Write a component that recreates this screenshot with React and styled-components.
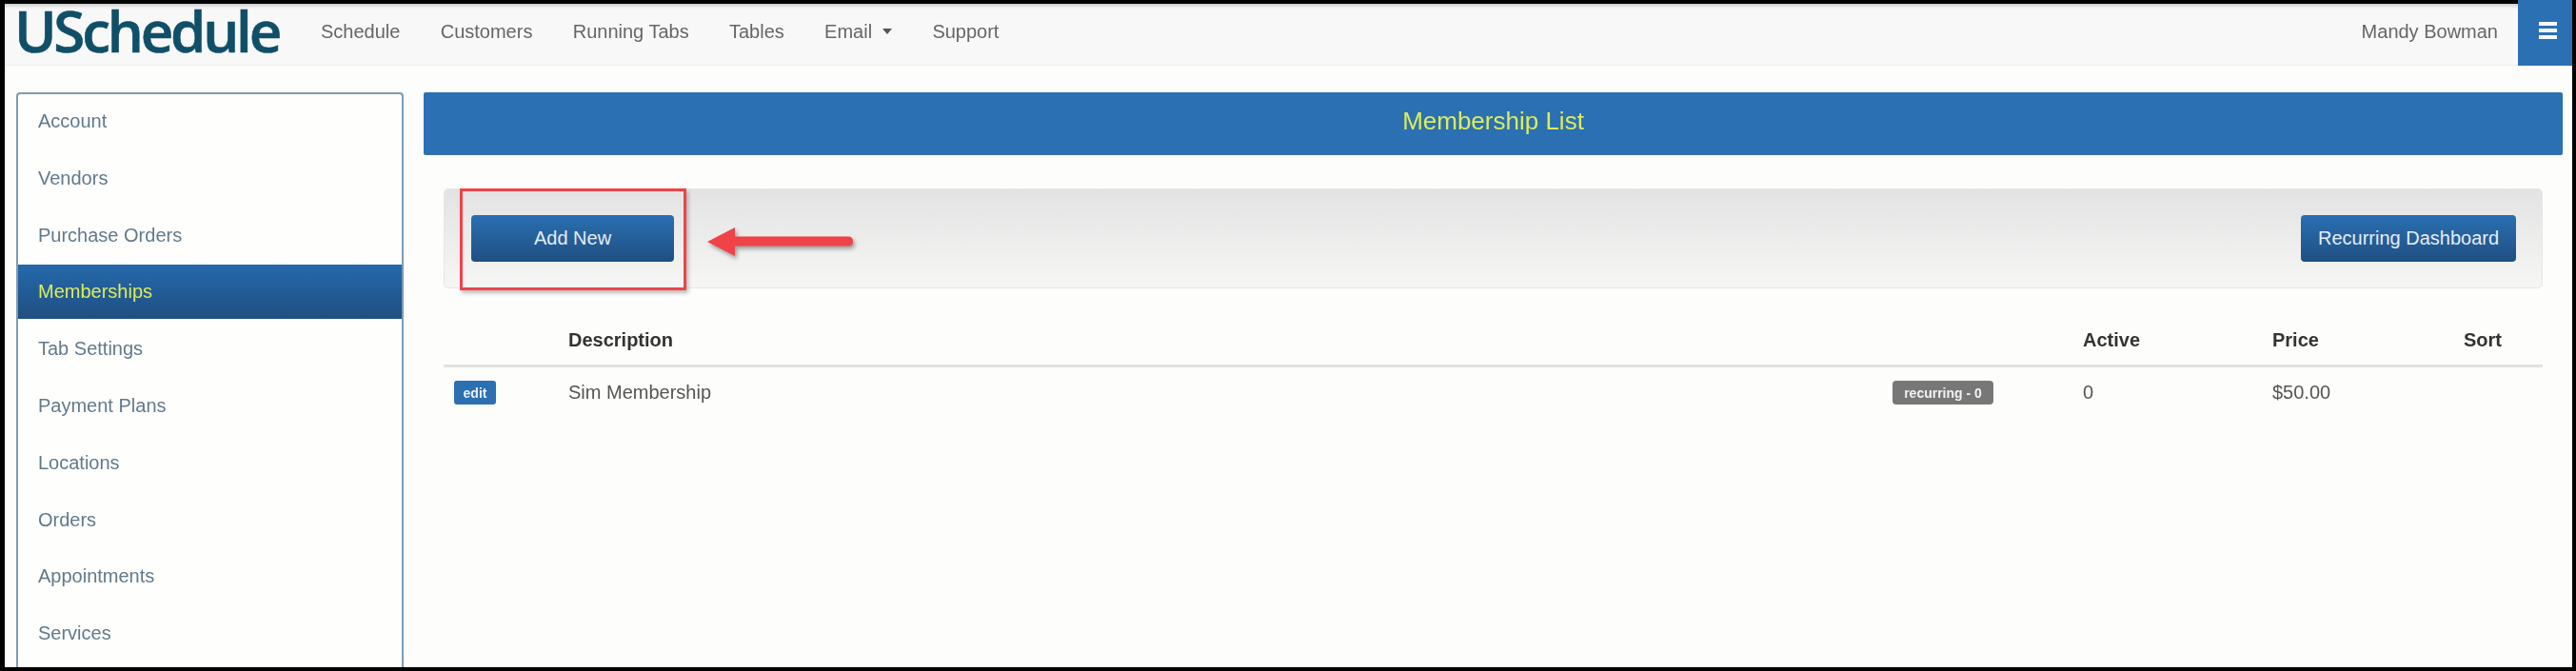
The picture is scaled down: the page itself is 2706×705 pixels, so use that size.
import React from "react";
import styled, { createGlobalStyle } from "styled-components";

const Global = createGlobalStyle`
  html, body { margin: 0; padding: 0; background: #000; }
  * { box-sizing: border-box; }
  body { font-family: "Liberation Sans", Arial, sans-serif; }
`;

const Frame = styled.div`
  width: 2706px;
  height: 705px;
  border-style: solid;
  border-color: #000;
  border-width: 4px 4px 4px 5px;
  background: #fdfdfb;
  display: flex;
  flex-direction: column;
  filter: blur(0.45px);
`;

const Navbar = styled.header`
  height: 65px;
  flex: none;
  display: flex;
  align-items: stretch;
  background: #f8f8f8;
  border-bottom: 1px solid #efefef;
  box-shadow: inset 0 5px 4px -3px #c4c4c4;
`;

const Logo = styled.div`
  width: 332px;
  padding-left: 10px;
  font-family: "Open Sans", sans-serif;
  font-weight: 600;
  font-size: 60px;
  line-height: 56px;
  letter-spacing: -3.2px;
  -webkit-text-stroke: 0.6px #0f4f68;
  color: #0f4f68;
`;

const NavLinks = styled.nav`
  display: flex;
  align-items: center;
  gap: 42.3px;
  flex: 1;
  padding-bottom: 6px;
`;

const NavLink = styled.a`
  font-size: 20px;
  color: #666;
  display: inline-flex;
  align-items: center;
`;

const Caret = styled.span`
  width: 0;
  height: 0;
  margin-left: 11px;
  border-top: 6px solid #555;
  border-left: 5px solid transparent;
  border-right: 5px solid transparent;
`;

const UserName = styled.div`
  display: flex;
  align-items: center;
  padding: 0 21px 6px 0;
  font-size: 20px;
  color: #666;
`;

const MenuBlock = styled.div`
  width: 57px;
  margin-top: -4px;
  margin-bottom: -1px;
  background: #2a70b3;
  display: flex;
  flex-direction: column;
  align-items: center;
  justify-content: flex-start;
  gap: 3px;
  padding: 23px 0 0 6px;
`;

const MenuBar = styled.span`
  width: 19px;
  height: 4px;
  background: #f4f8fb;
`;

const Body = styled.div`
  flex: 1;
  min-height: 0;
  display: flex;
  align-items: stretch;
  padding-top: 28px;
  overflow: hidden;
`;

const Sidebar = styled.aside`
  width: 407px;
  margin-left: 12px;
  flex: none;
  border: 2px solid #7d9bb3;
  border-bottom: 0;
  border-radius: 4px 4px 0 0;
  background: #fefefc;
  overflow: hidden;
`;

const SideList = styled.div`
  margin-top: -1px;
`;

const SideItem = styled.div`
  height: 59.75px;
  padding-left: 21px;
  display: flex;
  align-items: center;
  font-size: 20px;
  color: ${(p) => (p.$active ? "#dcec5a" : "#62798c")};
  background: ${(p) =>
    p.$active ? "linear-gradient(#2569ac, #1f4f80)" : "transparent"};
  ${(p) => p.$active && "height: 57px; margin: 0.5px 0 2.25px;"}
`;

const Main = styled.main`
  flex: 1;
  padding: 0 10px 0 21px;
  display: flex;
  flex-direction: column;
`;

const TitleBar = styled.div`
  height: 66px;
  background: #2a70b3;
  border-radius: 2px;
  border-bottom: 2px solid #3c6f9f;
  display: flex;
  align-items: center;
  justify-content: center;
  font-size: 26px;
  color: #dcec5a;
  padding-bottom: 4px;
`;

const Content = styled.div`
  padding: 35px 21px 0;
`;

const Well = styled.div`
  position: relative;
  height: 105px;
  display: flex;
  align-items: center;
  justify-content: space-between;
  padding: 0 27px 0 28px;
  background: linear-gradient(#e3e3e3, #f6f6f5);
  border: 1px solid #e6e6e6;
  border-radius: 5px;
`;

const Button = styled.button`
  height: 49px;
  width: ${(p) => p.$width}px;
  border: 0;
  border-radius: 4px;
  background: linear-gradient(#2a6fb1, #1f4f82);
  color: #e4edf5;
  font-family: inherit;
  font-size: 20px;
  padding: 0;
`;

const Highlight = styled.div`
  position: absolute;
  left: 16px;
  top: -1px;
  width: 238px;
  height: 107px;
  border: 3px solid #f04347;
  box-shadow: 2px 3px 4px rgba(0, 0, 0, 0.25);
  pointer-events: none;
`;

const Arrow = styled.svg`
  position: absolute;
  left: 276px;
  top: 40px;
  overflow: visible;
  filter: drop-shadow(2px 3px 2px rgba(0, 0, 0, 0.35));
`;

const TableRow = styled.div`
  display: grid;
  grid-template-columns: 131px 1591px 199px 201px 1fr;
  align-items: center;
  font-size: 20px;
  color: ${(p) => (p.$head ? "#333" : "#555")};
  font-weight: ${(p) => (p.$head ? 700 : 400)};
  height: ${(p) => (p.$head ? 54 : 53)}px;
  ${(p) => p.$head && "margin-top: 29px; border-bottom: 3px solid #e2e2e2;"}
`;

const CellWithBadge = styled.div`
  display: flex;
  justify-content: space-between;
  align-items: center;
  padding-right: 94px;
`;

const EditBadge = styled.span`
  justify-self: start;
  margin-left: 11px;
  width: 44px;
  height: 25px;
  border-radius: 3px;
  background: #2a70b3;
  color: #eef3f8;
  font-size: 14px;
  font-weight: 700;
  display: flex;
  align-items: center;
  justify-content: center;
`;

const GreyBadge = styled.span`
  width: 106px;
  height: 25px;
  border-radius: 4px;
  background: #777;
  color: #f2f2f2;
  font-size: 14px;
  font-weight: 700;
  display: flex;
  align-items: center;
  justify-content: center;
`;

const items = ["Account","Vendors","Purchase Orders","Memberships","Tab Settings","Payment Plans","Locations","Orders","Appointments","Services"];

export default function App() {
  return (
    <>
      <Global />
      <Frame>
        <Navbar>
          <Logo>USchedule</Logo>
          <NavLinks>
            <NavLink>Schedule</NavLink>
            <NavLink>Customers</NavLink>
            <NavLink>Running Tabs</NavLink>
            <NavLink>Tables</NavLink>
            <NavLink>Email<Caret /></NavLink>
            <NavLink>Support</NavLink>
          </NavLinks>
          <UserName>Mandy Bowman</UserName>
          <MenuBlock><MenuBar /><MenuBar /><MenuBar /></MenuBlock>
        </Navbar>
        <Body>
          <Sidebar>
            <SideList>
              {items.map((t) => (
                <SideItem key={t} $active={t === "Memberships"}>{t}</SideItem>
              ))}
            </SideList>
          </Sidebar>
          <Main>
            <TitleBar>Membership List</TitleBar>
            <Content>
              <Well>
                <Button $width={213}>Add New</Button>
                <Button $width={226}>Recurring Dashboard</Button>
                <Highlight />
                <Arrow width="153" height="30" viewBox="0 0 153 30">
                  <path d="M0 15 L29 0 V9.5 H148 Q153 9.5 153 14.5 Q153 19.5 148 19.5 H29 V30 Z" fill="#f04347" />
                </Arrow>
              </Well>
              <TableRow $head>
                <span />
                <span>Description</span>
                <span>Active</span>
                <span>Price</span>
                <span>Sort</span>
              </TableRow>
              <TableRow>
                <EditBadge>edit</EditBadge>
                <CellWithBadge>
                  <span>Sim Membership</span>
                  <GreyBadge>recurring - 0</GreyBadge>
                </CellWithBadge>
                <span>0</span>
                <span>$50.00</span>
                <span />
              </TableRow>
            </Content>
          </Main>
        </Body>
      </Frame>
    </>
  );
}
